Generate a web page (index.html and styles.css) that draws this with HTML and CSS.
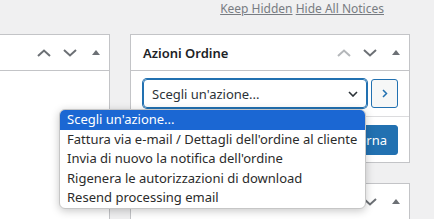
FILE: index.html
```html
<!DOCTYPE html>
<html lang="it">
  <head>
    <meta charset="UTF-8" />
    <meta name="viewport" content="width=device-width, initial-scale=1.0" />
    <title>Ordine</title>
    <link rel="stylesheet" href="styles.css">
  </head>
  <body>
    <div class="notices">
      <a href="#">Keep Hidden</a> <a href="#">Hide All Notices</a>
    </div>
    <div class="columns">
      <div class="col-left">
        <div class="postbox postbox-left">
          <div class="postbox-header">
            <h2></h2>
            <div class="handle-actions">
              <span class="handle"><svg width="14" height="8" viewBox="0 0 14 8"><path d="M1 7 L7 1.5 L13 7" fill="none" stroke="currentColor" stroke-width="2"/></svg></span>
              <span class="handle"><svg width="14" height="8" viewBox="0 0 14 8"><path d="M1 1 L7 6.5 L13 1" fill="none" stroke="currentColor" stroke-width="2"/></svg></span>
              <span class="handle"><svg width="8" height="5" viewBox="0 0 8 5"><path d="M0 5 L4 0 L8 5 Z" fill="currentColor"/></svg></span>
            </div>
          </div>
        </div>
      </div>
      <div class="col-right">
        <div class="postbox">
          <div class="postbox-header">
            <h2>Azioni Ordine</h2>
            <div class="handle-actions">
              <span class="handle disabled"><svg width="14" height="8" viewBox="0 0 14 8"><path d="M1 7 L7 1.5 L13 7" fill="none" stroke="currentColor" stroke-width="2"/></svg></span>
              <span class="handle"><svg width="14" height="8" viewBox="0 0 14 8"><path d="M1 1 L7 6.5 L13 1" fill="none" stroke="currentColor" stroke-width="2"/></svg></span>
              <span class="handle"><svg width="8" height="5" viewBox="0 0 8 5"><path d="M0 5 L4 0 L8 5 Z" fill="currentColor"/></svg></span>
            </div>
          </div>
          <div class="action-row">
            <div class="action-select">
              <span>Scegli un'azione...</span>
              <svg width="10" height="6" viewBox="0 0 10 6"><path d="M1 1 L5 5 L9 1" fill="none" stroke="#2c3338" stroke-width="1.6"/></svg>
            </div>
            <button class="go-btn"><svg width="6" height="9" viewBox="0 0 6 9"><path d="M1 1 L4.5 4.5 L1 8" fill="none" stroke="#2271b1" stroke-width="1.5"/></svg></button>
          </div>
          <div class="save-row">
            <button class="save-btn">Aggiorna</button>
          </div>
        </div>
        <div class="postbox postbox-next">
          <div class="postbox-header">
            <h2></h2>
            <div class="handle-actions">
              <span class="handle"><svg width="14" height="8" viewBox="0 0 14 8"><path d="M1 7 L7 1.5 L13 7" fill="none" stroke="currentColor" stroke-width="2"/></svg></span>
              <span class="handle"><svg width="14" height="8" viewBox="0 0 14 8"><path d="M1 1 L7 6.5 L13 1" fill="none" stroke="currentColor" stroke-width="2"/></svg></span>
              <span class="handle"><svg width="8" height="5" viewBox="0 0 8 5"><path d="M0 5 L4 0 L8 5 Z" fill="currentColor"/></svg></span>
            </div>
          </div>
        </div>
      </div>
    </div>
    <ul class="dropdown">
      <li class="selected">Scegli un'azione...</li>
      <li>Fattura via e-mail / Dettagli dell'ordine al cliente</li>
      <li>Invia di nuovo la notifica dell'ordine</li>
      <li>Rigenera le autorizzazioni di download</li>
      <li>Resend processing email</li>
    </ul>
  </body>
</html>
```

FILE: styles.css
```css
* {
  box-sizing: border-box;
}
html {
  overflow: hidden;
}
body {
  margin: 0;
  height: 219px;
  overflow: hidden;
  position: relative;
  background: #f0f0f1;
  font-family: "Noto Sans", "Open Sans", sans-serif;
  color: #1d2327;
}
.notices {
  height: 34px;
  padding: 1px 50px 0 0;
  text-align: right;
  font-size: 12px;
  line-height: 16px;
}
.notices a {
  color: #787c82;
  text-decoration: underline;
}
.columns {
  display: flex;
  align-items: flex-start;
  gap: 20px;
}
.col-left {
  width: 110px;
}
.col-right {
  width: 280px;
}
.postbox {
  background: #fff;
  border: 1px solid #c3c4c7;
}
.postbox-left {
  border-left: none;
  border-bottom: none;
  height: 185px;
}
.postbox-next {
  margin-top: 20px;
  border-bottom: none;
  height: 36px;
}
.postbox-header {
  display: flex;
  align-items: center;
  justify-content: space-between;
  height: 36px;
  border-bottom: 1px solid #c3c4c7;
}
.postbox-next .postbox-header {
  height: 35px;
  border-bottom: none;
}
.postbox-header h2 {
  margin: 0;
  padding-left: 12px;
  font-size: 13px;
  font-weight: 600;
}
.handle-actions {
  display: flex;
}
.handle {
  width: 26px;
  height: 35px;
  display: flex;
  align-items: center;
  justify-content: center;
  color: #6c7075;
}
.handle.disabled {
  color: #b4b7ba;
}
.action-row {
  display: flex;
  gap: 4px;
  padding: 8px 11px 8px 12px;
  border-bottom: 1px solid #dcdcde;
}
.action-select {
  width: 224px;
  height: 29px;
  display: flex;
  align-items: center;
  justify-content: space-between;
  padding: 0 8px 0 8px;
  border: 1px solid #2271b1;
  box-shadow: 0 0 0 1px #2271b1;
  border-radius: 4px;
  font-size: 13px;
  color: #2c3338;
}
.go-btn {
  width: 27px;
  height: 29px;
  padding: 0;
  display: flex;
  align-items: center;
  justify-content: center;
  background: #f6f7f7;
  border: 1px solid #2271b1;
  border-radius: 3px;
}
.save-row {
  display: flex;
  justify-content: flex-end;
  padding: 8px 11px 7px 12px;
}
.save-btn {
  height: 30px;
  padding: 0 10px;
  background: #2271b1;
  border: 1px solid #2271b1;
  border-radius: 3px;
  color: #fff;
  font-family: "Noto Sans", "Open Sans", sans-serif;
  font-size: 13px;
}
.dropdown {
  position: absolute;
  left: 59px;
  top: 109px;
  width: 307px;
  margin: 0;
  padding: 0;
  list-style: none;
  background: #fff;
  border: 1px solid #c6c6c6;
  border-radius: 6px;
  overflow: hidden;
  box-shadow: 0 2px 8px rgba(0, 0, 0, 0.22);
  font-size: 13px;
  color: #2b2b2b;
}
.dropdown li {
  height: 19.6px;
  line-height: 19.6px;
  padding: 0 7px;
  white-space: nowrap;
}
.dropdown li.selected {
  background: #1b67d3;
  color: #fff;
}
```
